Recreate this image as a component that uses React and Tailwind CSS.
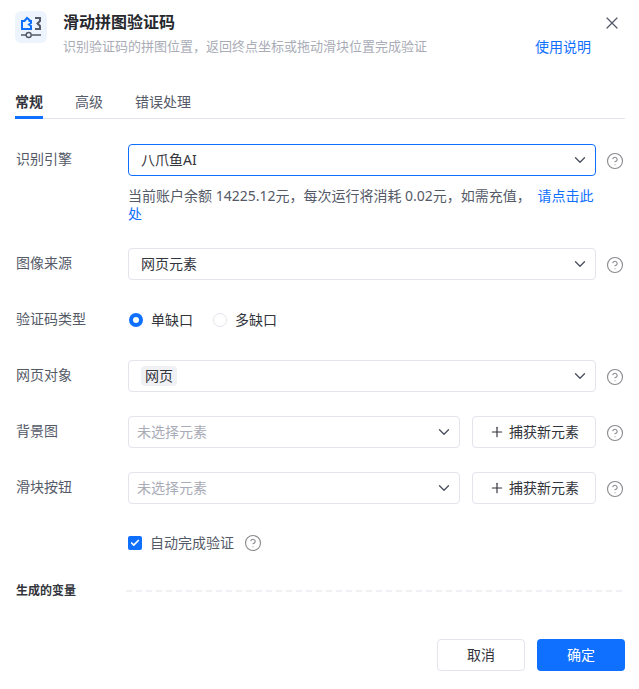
import { X, ChevronDown, Plus, CircleHelp, Check } from 'lucide-react'

function Help() {
  return <CircleHelp className="w-[18px] h-[18px] text-[#8a8a8f] shrink-0" strokeWidth={1.5} />
}

function Select({ children, focus, className = '' }) {
  return (
    <div
      className={`h-8 flex items-center justify-between pr-1.5 bg-white border rounded ${
        focus ? 'border-[#0f6fff]' : 'border-[#e3e4ec]'
      } ${className}`}
    >
      <div className="text-sm text-[#33353c] leading-none">{children}</div>
      <ChevronDown className="w-[18px] h-[18px] text-[#4b4f5c]" strokeWidth={1.75} />
    </div>
  )
}

function Row({ label, children }) {
  return (
    <div className="flex items-center h-8 mb-6">
      <div className="w-[113px] pl-px pb-0.5 text-sm text-[#555a68]">{label}</div>
      {children}
    </div>
  )
}

function ElementRow({ label }) {
  return (
    <Row label={label}>
      <Select className="w-[332px] pl-2">
        <span className="text-[#a9acb6]">未选择元素</span>
      </Select>
      <button className="ml-3 w-[124px] h-8 flex items-center justify-center gap-1 border border-[#e3e4ec] rounded text-sm text-[#33353c]">
        <Plus className="w-4 h-4" strokeWidth={1.75} /> 捕获新元素
      </button>
      <div className="ml-[10px] mt-[2px]"><Help /></div>
    </Row>
  )
}

export default function App() {
  return (
    <div className="w-[639px] h-[689px] bg-white overflow-hidden px-[15px] pt-[11px] font-['Noto_Sans','Noto_Sans_CJK_SC',sans-serif]">
      {/* header */}
      <div className="flex h-[68px]">
        <div className="w-8 h-8 rounded-md bg-[#eef4fe] shrink-0">
          <svg width="32" height="32" viewBox="0 0 32 32" fill="none">
            <path d="M7 18V10H9.5L12 7L14.5 9V10H16V12L14 13.5L16 15V18Z" stroke="#0f6fff" strokeWidth="2" />
            <path d="M20 7H25V10L22.5 12.5L25 15V18H20" stroke="#555a68" strokeWidth="2" />
            <path d="M6 24H11M16.5 24H26" stroke="#555a68" strokeWidth="1.5" />
            <circle cx="13.7" cy="24" r="2.5" stroke="#555a68" strokeWidth="1.4" />
          </svg>
        </div>
        <div className="ml-4 flex-1 min-w-0">
          <div className="text-base font-bold leading-[22px] text-[#26282e]">滑动拼图验证码</div>
          <div className="mt-[3px] text-[13px] leading-[20px] text-[#a9acb6]">识别验证码的拼图位置，返回终点坐标或拖动滑块位置完成验证</div>
        </div>
        <div className="w-[100px] shrink-0 flex flex-col items-end">
          <X className="w-5 h-5 mt-[2px] mr-[2px] text-[#555a68]" strokeWidth={1.5} />
          <a className="mt-1 mr-[33px] text-sm leading-5 text-[#0f6fff]">使用说明</a>
        </div>
      </div>

      {/* tabs */}
      <div className="flex gap-8 w-[610px] h-[40px] border-b border-[#e3e4ec] text-sm mb-[25px]">
        <div className="h-[40px] pt-[13px] font-bold text-[#33353c] border-b-[3px] border-[#0f6fff]">常规</div>
        <div className="pt-[13px] text-[#555a68]">高级</div>
        <div className="pt-[13px] text-[#555a68]">错误处理</div>
      </div>

      {/* form */}
      <div className="flex items-center h-8">
        <div className="w-[113px] pl-px pb-0.5 text-sm text-[#555a68]">识别引擎</div>
        <Select focus className="w-[468px] pl-3">八爪鱼AI</Select>
        <div className="ml-[10px] mt-[2px]"><Help /></div>
      </div>
      <div className="ml-[113px] w-[468px] mt-[11px] mb-[25px] text-sm leading-[18px] text-[#555a68]">
        当前账户余额 14225.12元，每次运行将消耗 0.02元，如需充值， <a className="ml-[3px] text-[#0f6fff]">请点击此</a>
        <br />
        <a className="text-[#0f6fff]">处</a>
      </div>

      <Row label="图像来源">
        <Select className="w-[468px] pl-3">网页元素</Select>
        <div className="ml-[10px] mt-[2px]"><Help /></div>
      </Row>

      <Row label="验证码类型">
        <div className="flex items-center text-sm text-[#33353c]">
          <span className="w-[14px] h-[14px] ml-px rounded-full border-[4px] border-[#0f6fff] bg-white" />
          <span className="ml-2">单缺口</span>
          <span className="w-[14px] h-[14px] ml-5 rounded-full border border-[#e3e4ec] bg-white" />
          <span className="ml-2">多缺口</span>
        </div>
      </Row>

      <Row label="网页对象">
        <Select className="w-[468px] pl-3">
          <span className="inline-block px-1 py-[2px] rounded-sm bg-[#f0f1f5] text-sm leading-[16px] text-[#33353c]">网页</span>
        </Select>
        <div className="ml-[10px] mt-[2px]"><Help /></div>
      </Row>

      <ElementRow label="背景图" />
      <ElementRow label="滑块按钮" />

      <div className="ml-[113px] flex items-center h-5 mt-[29px]">
        <span className="w-[14px] h-[14px] rounded-[2px] bg-[#0f6fff] flex items-center justify-center">
          <Check className="w-[10px] h-[10px] text-white" strokeWidth={4} />
        </span>
        <span className="ml-2 text-sm text-[#555a68]">自动完成验证</span>
        <div className="ml-[10px]"><Help /></div>
      </div>

      <div className="flex items-center mt-[30px]">
        <div className="w-[111px] pl-px text-xs font-bold text-[#33353c]">生成的变量</div>
        <div className="w-[496px] border-t-2 border-dashed border-[#f0f1f5]" />
      </div>

      <div className="flex justify-end gap-3 w-[610px] mt-[40px]">
        <button className="w-[88px] h-8 rounded border border-[#e3e4ec] bg-white text-sm text-[#33353c]">取消</button>
        <button className="w-[88px] h-8 rounded bg-[#0f6fff] text-sm text-white">确定</button>
      </div>
    </div>
  )
}
